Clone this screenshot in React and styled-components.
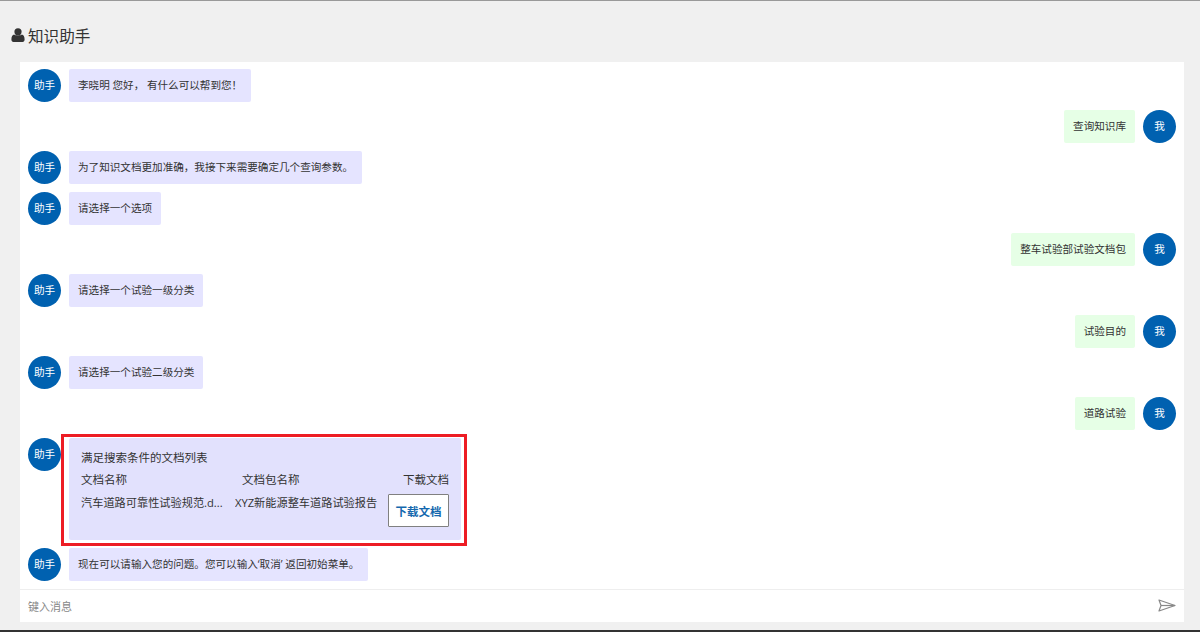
import React from "react";
import styled, { createGlobalStyle } from "styled-components";

const GlobalStyle = createGlobalStyle`
  html, body {
    margin: 0;
    padding: 0;
    background: #f0f0f0;
    font-family: "Open Sans", "Noto Sans CJK SC", sans-serif;
    color: #333;
  }
`;

const Page = styled.div`
  height: 632px;
  box-sizing: border-box;
  display: flex;
  flex-direction: column;
  overflow: hidden;
  border-top: 1px solid #999;
  border-bottom: 2px solid #333;
  padding: 0 16px 8px 20px;
`;
const Title = styled.div`
  height: 61px;
  flex-shrink: 0;
  display: flex;
  align-items: center;
  gap: 3px;
  margin-left: -9px;
  padding-top: 7px;
  box-sizing: border-box;
  font-size: 15.6px;
  color: #333;
`;
const Panel = styled.div`
  flex: 1;
  display: flex;
  flex-direction: column;
  background: #fff;
  min-height: 0;
`;
const Messages = styled.div`
  flex: 1;
  display: flex;
  flex-direction: column;
  gap: 8px;
  padding: 7px 8px 8px;
  min-height: 0;
`;
const Row = styled.div`
  display: flex;
  align-items: flex-start;
  gap: 8px;
  justify-content: ${(p) => (p.$mine ? "flex-end" : "flex-start")};
`;
const Avatar = styled.div`
  width: 33px;
  height: 33px;
  flex-shrink: 0;
  border-radius: 50%;
  background: #0061b0;
  color: #fff;
  font-size: 10.6px;
  line-height: 32px;
  text-align: center;
`;
const Bubble = styled.div`
  padding: 0 9px;
  height: 33px;
  line-height: 32px;
  font-size: 10.58px;
  border-radius: 2px;
  color: #333;
  background: ${(p) => (p.$mine ? "#e6ffe6" : "#e5e4ff")};
`;
const DocBubble = styled.div`
  position: relative;
  width: 392px;
  height: 102px;
  box-sizing: border-box;
  padding: 10px 12px 0;
  border-radius: 2px;
  background: #e2e1fd;
  font-size: 11.5px;
  color: #333;
`;
const Highlight = styled.div`
  position: absolute;
  top: -4px;
  left: -8px;
  right: -6px;
  bottom: -6px;
  border: 3px solid #ed1c24;
  pointer-events: none;
`;
const DocTitle = styled.div`
  line-height: 20px;
`;
const DocTable = styled.div`
  display: grid;
  grid-template-columns: 154px 153px 61px;
  margin-top: 2px;
  line-height: 20px;
`;
const HeadCell = styled.div`
  text-align: ${(p) => p.$align || "left"};
  padding-left: ${(p) => p.$indent || 0}px;
`;
const DocCell = styled.div`
  margin-top: 3px;
  font-size: 11.2px;
  white-space: nowrap;
  overflow: hidden;
`;
const DownloadButton = styled.button`
  margin-top: 4px;
  width: 61px;
  height: 33px;
  padding: 0;
  box-sizing: border-box;
  border: 1px solid #808080;
  border-radius: 1px;
  background: #fff;
  color: #1468ae;
  font-family: inherit;
  font-size: 11.5px;
  font-weight: 700;
`;
const InputBar = styled.div`
  height: 33px;
  flex-shrink: 0;
  box-sizing: border-box;
  border-top: 1px solid #eee;
  display: flex;
  align-items: center;
  justify-content: space-between;
  padding: 0 8px 1px;
  font-size: 11px;
  color: #888;
`;

function Message({ mine, children }) {
  if (mine) {
    return (
      <Row $mine>
        <Bubble $mine>{children}</Bubble>
        <Avatar>我</Avatar>
      </Row>
    );
  }
  return (
    <Row>
      <Avatar>助手</Avatar>
      <Bubble>{children}</Bubble>
    </Row>
  );
}

function UserIcon() {
  return (
    <svg width="14" height="14" viewBox="0 0 14 14" fill="#333">
      <circle cx="7" cy="3.8" r="3.6" />
      <path d="M3.2 6.6 C4.2 7.8 9.8 7.8 10.8 6.6 C12.6 7 13.6 8.8 13.6 11.6 C13.6 13 12.8 14 11.6 14 H2.4 C1.2 14 0.4 13 0.4 11.6 C0.4 8.8 1.4 7 3.2 6.6 Z" />
    </svg>
  );
}

export default function App() {
  return (
    <>
      <GlobalStyle />
      <Page>
        <Title>
          <UserIcon />
          知识助手
        </Title>
        <Panel>
          <Messages>
            <Message>李晓明 您好， 有什么可以帮到您！</Message>
            <Message mine>查询知识库</Message>
            <Message>为了知识文档更加准确，我接下来需要确定几个查询参数。</Message>
            <Message>请选择一个选项</Message>
            <Message mine>整车试验部试验文档包</Message>
            <Message>请选择一个试验一级分类</Message>
            <Message mine>试验目的</Message>
            <Message>请选择一个试验二级分类</Message>
            <Message mine>道路试验</Message>
            <Row>
              <Avatar>助手</Avatar>
              <DocBubble>
                <Highlight />
                <DocTitle>满足搜索条件的文档列表</DocTitle>
                <DocTable>
                  <HeadCell>文档名称</HeadCell>
                  <HeadCell $indent={7}>文档包名称</HeadCell>
                  <HeadCell $align="right">下载文档</HeadCell>
                  <DocCell>汽车道路可靠性试验规范.d...</DocCell>
                  <DocCell>XYZ新能源整车道路试验报告</DocCell>
                  <DownloadButton>下载文档</DownloadButton>
                </DocTable>
              </DocBubble>
            </Row>
            <Message>现在可以请输入您的问题。您可以输入‘取消’ 返回初始菜单。</Message>
          </Messages>
          <InputBar>
            <span>键入消息</span>
            <svg width="18" height="13" viewBox="0 0 18 13" fill="none" stroke="#888" strokeWidth="1.2" strokeLinejoin="round">
              <path d="M1 1 L17 6.5 L1 12 L3 6.5 Z" />
              <path d="M3 6.5 H17" />
            </svg>
          </InputBar>
        </Panel>
      </Page>
    </>
  );
}
